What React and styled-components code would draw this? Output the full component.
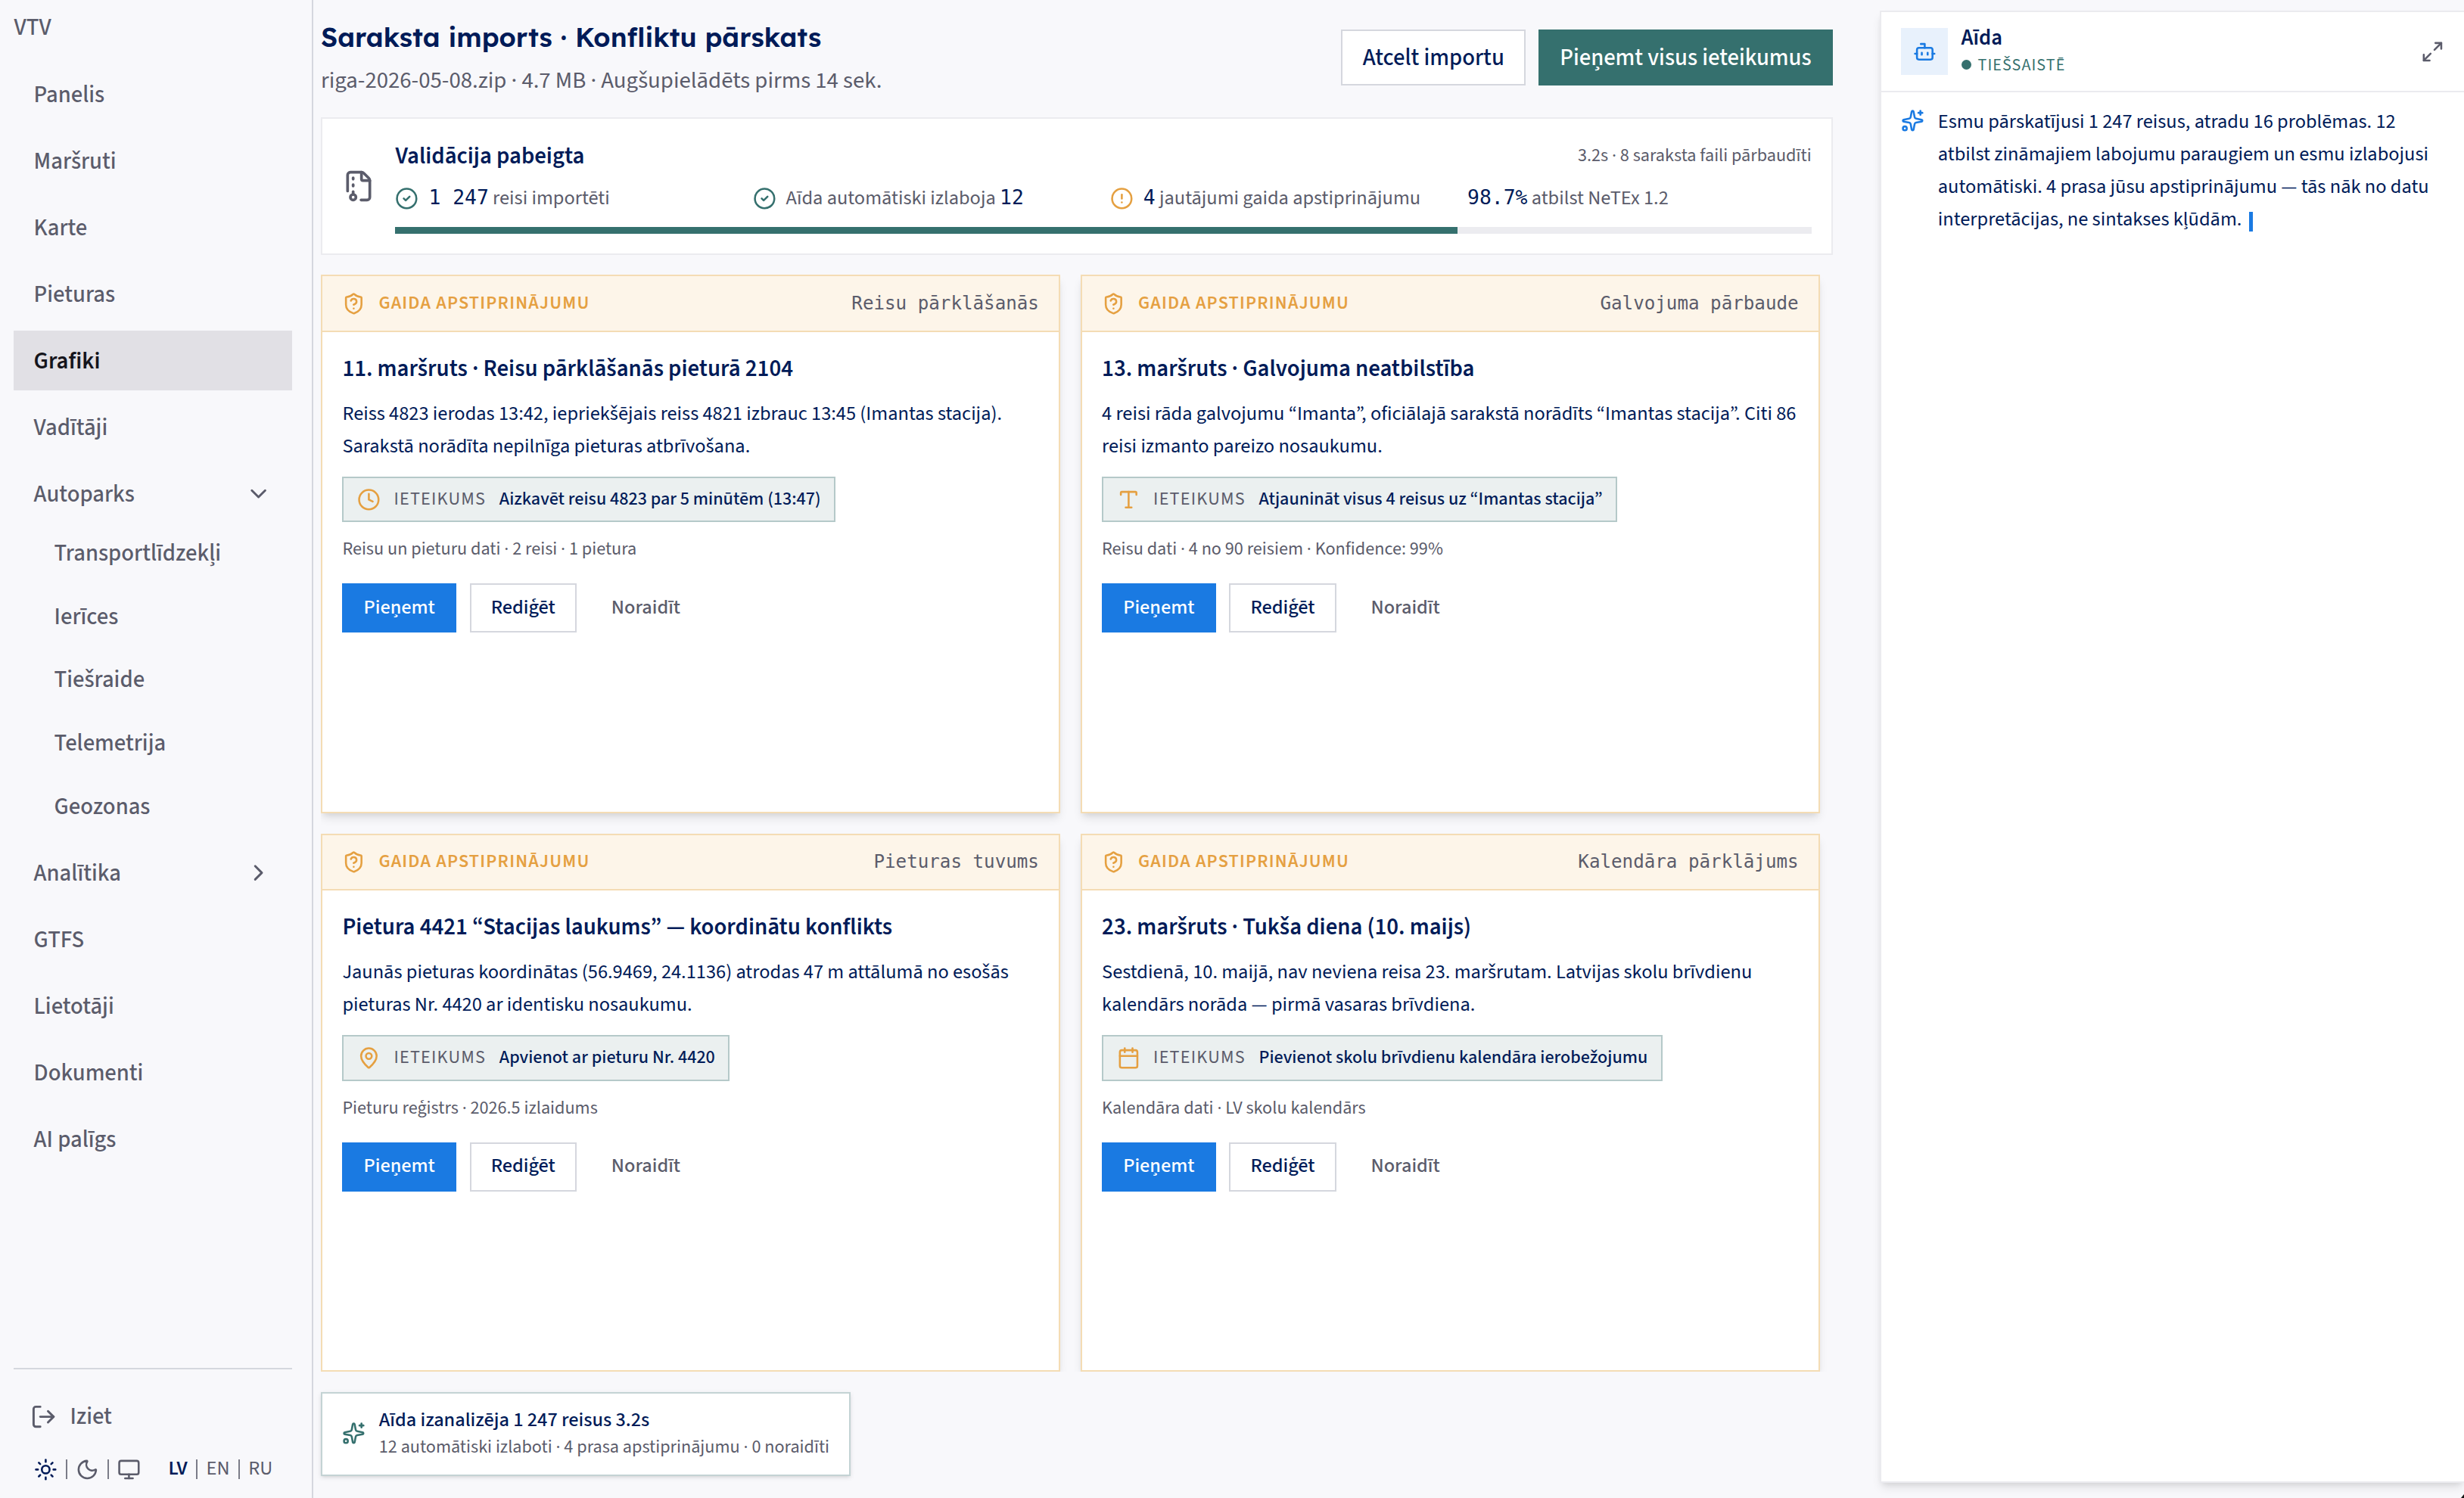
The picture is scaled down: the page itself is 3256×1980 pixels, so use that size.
import React from 'react';
import styled, { createGlobalStyle } from 'styled-components';
import {
    Bot,
    Calendar,
    ChevronDown,
    ChevronRight,
    CircleAlert,
    CircleCheck,
    Clock,
    FileArchive,
    LogOut,
    MapPin,
    Maximize2,
    Monitor,
    Moon,
    ShieldQuestionMark,
    Sparkles,
    Sun,
    Type,
} from 'lucide-react';

const navy = '#001b58';
const grey = '#5b5c6b';
const teal = '#35706e';
const amber = '#e5a041';
const blue = '#1a7ae2';
const line = '#d5d7de';
const mono = '"DejaVu Sans Mono", "Liberation Mono", monospace';

const navItems = [
    { label: 'Panelis' },
    { label: 'Maršruti' },
    { label: 'Karte' },
    { label: 'Pieturas' },
    { label: 'Grafiki', active: true },
    { label: 'Vadītāji' },
    {
        label: 'Autoparks',
        icon: ChevronDown,
        children: ['Transportlīdzekļi', 'Ierīces', 'Tiešraide', 'Telemetrija', 'Geozonas'],
    },
    { label: 'Analītika', icon: ChevronRight },
    { label: 'GTFS' },
    { label: 'Lietotāji' },
    { label: 'Dokumenti' },
    { label: 'AI palīgs' },
];

const conflicts = [
    {
        category: 'Reisu pārklāšanās',
        title: '11. maršruts · Reisu pārklāšanās pieturā 2104',
        text: 'Reiss 4823 ierodas 13:42, iepriekšējais reiss 4821 izbrauc 13:45 (Imantas stacija). Sarakstā norādīta nepilnīga pieturas atbrīvošana.',
        icon: Clock,
        fix: 'Aizkavēt reisu 4823 par 5 minūtēm (13:47)',
        meta: 'Reisu un pieturu dati · 2 reisi · 1 pietura',
    },
    {
        category: 'Galvojuma pārbaude',
        title: '13. maršruts · Galvojuma neatbilstība',
        text: '4 reisi rāda galvojumu “Imanta”, oficiālajā sarakstā norādīts “Imantas stacija”. Citi 86 reisi izmanto pareizo nosaukumu.',
        icon: Type,
        fix: 'Atjaunināt visus 4 reisus uz “Imantas stacija”',
        meta: 'Reisu dati · 4 no 90 reisiem · Konfidence: 99%',
    },
    {
        category: 'Pieturas tuvums',
        title: 'Pietura 4421 “Stacijas laukums” — koordinātu konflikts',
        text: 'Jaunās pieturas koordinātas (56.9469, 24.1136) atrodas 47 m attālumā no esošās pieturas Nr. 4420 ar identisku nosaukumu.',
        icon: MapPin,
        fix: 'Apvienot ar pieturu Nr. 4420',
        meta: 'Pieturu reģistrs · 2026.5 izlaidums',
    },
    {
        category: 'Kalendāra pārklājums',
        title: '23. maršruts · Tukša diena (10. maijs)',
        text: 'Sestdienā, 10. maijā, nav neviena reisa 23. maršrutam. Latvijas skolu brīvdienu kalendārs norāda — pirmā vasaras brīvdiena.',
        icon: Calendar,
        fix: 'Pievienot skolu brīvdienu kalendāra ierobežojumu',
        meta: 'Kalendāra dati · LV skolu kalendārs',
    },
];

export default () => (
    <Page>
        <GlobalStyle />
        <Sidebar>
            <Brand>VTV</Brand>
            <Nav>
                {navItems.map(({ label, active, icon: Icon, children }) => (
                    <div key={label}>
                        <NavItem $active={active}>
                            {label}
                            {Icon ? <Icon size={35.2} /> : ''}
                        </NavItem>
                        {children ? (
                            <SubNav>
                                {children.map((child) => <SubItem key={child}>{child}</SubItem>)}
                            </SubNav>
                        ) : ''}
                    </div>
                ))}
            </Nav>
            <SidebarFooter>
                <Logout><LogOut size={35.2} />Iziet</Logout>
                <Settings>
                    <Themes>
                        <Sun size={30.8} color={navy} />
                        <Divider />
                        <Moon size={30.8} />
                        <Divider />
                        <Monitor size={30.8} />
                    </Themes>
                    <Languages>
                        <Language $active>LV</Language>
                        <Divider />
                        <Language>EN</Language>
                        <Divider />
                        <Language>RU</Language>
                    </Languages>
                </Settings>
            </SidebarFooter>
        </Sidebar>

        <Main>
            <Header>
                <div>
                    <Title>Saraksta imports · Konfliktu pārskats</Title>
                    <Subtitle>riga-2026-05-08.zip · 4.7 MB · Augšupielādēts pirms 14 sek.</Subtitle>
                </div>
                <HeaderActions>
                    <HeaderButton>Atcelt importu</HeaderButton>
                    <HeaderButton $primary>Pieņemt visus ieteikumus</HeaderButton>
                </HeaderActions>
            </Header>

            <Validation>
                <FileArchive size={44} color={grey} />
                <ValidationBody>
                    <ValidationTop>
                        <ValidationTitle>Validācija pabeigta</ValidationTitle>
                        <Small>3.2s · 8 saraksta faili pārbaudīti</Small>
                    </ValidationTop>
                    <Stats>
                        <Stat>
                            <CircleCheck size={30.8} color={teal} />
                            <span><Value>1 247</Value> reisi importēti</span>
                        </Stat>
                        <Stat>
                            <CircleCheck size={30.8} color={teal} />
                            <span>Aīda automātiski izlaboja <Value>12</Value></span>
                        </Stat>
                        <Stat>
                            <CircleAlert size={30.8} color={amber} />
                            <span><Value>4</Value> jautājumi gaida apstiprinājumu</span>
                        </Stat>
                        <Stat>
                            <span><Value>98.7%</Value> atbilst NeTEx 1.2</span>
                        </Stat>
                    </Stats>
                    <Progress><ProgressFill /></Progress>
                </ValidationBody>
            </Validation>

            <Conflicts>
                {conflicts.map(({ category, title, text, icon: Icon, fix, meta }) => (
                    <Card key={title}>
                        <CardHeader>
                            <ShieldQuestionMark size={30.8} color={amber} />
                            <CardStatus>GAIDA APSTIPRINĀJUMU</CardStatus>
                            <Category>{category}</Category>
                        </CardHeader>
                        <CardBody>
                            <CardTitle>{title}</CardTitle>
                            <CardText>{text}</CardText>
                            <Suggestion>
                                <Icon size={30.8} color={amber} />
                                <SuggestionLabel>IETEIKUMS</SuggestionLabel>
                                <SuggestionText>{fix}</SuggestionText>
                            </Suggestion>
                            <Small>{meta}</Small>
                            <CardActions>
                                <AcceptButton>Pieņemt</AcceptButton>
                                <EditButton>Rediģēt</EditButton>
                                <CardButton>Noraidīt</CardButton>
                            </CardActions>
                        </CardBody>
                    </Card>
                ))}
            </Conflicts>

            <Toast>
                <Sparkles size={30.8} color={teal} />
                <div>
                    <ToastTitle>Aīda izanalizēja 1 247 reisus 3.2s</ToastTitle>
                    <ToastText>12 automātiski izlaboti · 4 prasa apstiprinājumu · 0 noraidīti</ToastText>
                </div>
            </Toast>
        </Main>

        <Assistant>
            <AssistantHeader>
                <Avatar><Bot size={30.8} color={blue} /></Avatar>
                <AssistantInfo>
                    <AssistantName>Aīda</AssistantName>
                    <Online>TIEŠSAISTĒ</Online>
                </AssistantInfo>
                <Maximize2 size={30.8} color={grey} />
            </AssistantHeader>
            <Message>
                <Sparkles size={30.8} color={blue} />
                <MessageText>
                    Esmu pārskatījusi 1 247 reisus, atradu 16 problēmas. 12 atbilst zināmajiem labojumu paraugiem
                    un esmu izlabojusi automātiski. 4 prasa jūsu apstiprinājumu — tās nāk no datu interpretācijas,
                    ne sintakses kļūdām. <Cursor />
                </MessageText>
            </Message>
        </Assistant>
        <Grip viewBox="0 0 4 5"><path d="M4 0V5H0Z" fill="#111" /></Grip>
    </Page>
);

const GlobalStyle = createGlobalStyle`
* {
    box-sizing: border-box;
}
body {
    margin: 0;
    background: #f8f8fb;
    color: ${navy};
    font: 400 26.4px/1.5 "Source Sans 3", "Noto Sans", sans-serif;
}
button {
    font: inherit;
}
svg {
    flex-shrink: 0;
}
`;

const Page = styled.div`
display: grid;
grid-template-columns: 414px 2008px minmax(0, 1fr);
grid-template-rows: 1980px;
overflow: hidden;
position: relative;
`;

const Sidebar = styled.aside`
display: flex;
flex-direction: column;
padding: 13px 26px 16px 17.6px;
border-right: 2px solid ${line};
color: ${grey};
font-size: 30.8px;
font-weight: 500;
`;

const Brand = styled.div`
height: 71.6px;
padding-left: 1px;
`;

const Nav = styled.nav`
display: flex;
flex-direction: column;
gap: 8.8px;
flex-grow: 1;
`;

const NavItem = styled.div`
display: flex;
align-items: center;
justify-content: space-between;
height: 79.2px;
padding: 1px 26.4px 0 27px;
background: ${({ $active }) => $active ? '#e1e0e5' : 'transparent'};
color: ${({ $active }) => $active ? '#15151c' : 'inherit'};
font-weight: ${({ $active }) => $active ? 600 : 500};
`;

const SubNav = styled.div`
display: flex;
flex-direction: column;
gap: 4.4px;
`;

const SubItem = styled.div`
display: flex;
align-items: center;
height: 79.2px;
padding-left: 54px;
`;

const SidebarFooter = styled.div`
border-top: 2px solid ${line};
`;

const Logout = styled.div`
display: flex;
align-items: center;
gap: 17.6px;
padding-left: 22px;
height: 79.2px;
margin-top: 23px;
`;

const Settings = styled.div`
display: flex;
align-items: center;
height: 44px;
margin-top: 8px;
padding-left: 27.4px;
font-size: 26.4px;
font-weight: 400;
`;

const Themes = styled.div`
display: flex;
align-items: center;
gap: 11px;
margin-right: 37px;
`;

const Languages = styled.div`
display: flex;
align-items: center;
gap: 11.4px;
`;

const Language = styled.span`
color: ${({ $active }) => $active ? navy : 'inherit'};
font-weight: ${({ $active }) => $active ? 600 : 400};
`;

const Divider = styled.span`
width: 2px;
height: 26px;
background: ${grey};
opacity: .8;
`;

const Main = styled.main`
display: flex;
flex-direction: column;
gap: 26.4px;
padding: 22px 0 29.4px 10px;
`;

const Header = styled.header`
display: flex;
align-items: center;
justify-content: space-between;
height: 107px;
`;

const Title = styled.h1`
margin: 0;
font: 600 35.2px/52px Lexend, Inter, sans-serif;
`;

const Subtitle = styled.div`
color: ${grey};
font-size: 30.8px;
line-height: 50px;
padding-top: 6px;
margin-bottom: -2px;
`;

const HeaderActions = styled.div`
display: flex;
gap: 16.6px;
`;

const HeaderButton = styled.button`
height: 74px;
padding: 2px 26.4px 0;
border: 2px solid ${({ $primary }) => $primary ? teal : line};
background: ${({ $primary }) => $primary ? teal : '#fff'};
color: ${({ $primary }) => $primary ? '#fff' : navy};
font-size: 30.8px;
font-weight: 500;
`;

const Validation = styled.section`
display: flex;
align-items: center;
gap: 26px;
height: 181.6px;
padding: 0 26.4px;
border: 2px solid #ebebef;
background: #fff;
`;

const ValidationBody = styled.div`
flex-grow: 1;
`;

const ValidationTop = styled.div`
display: flex;
align-items: center;
justify-content: space-between;
height: 44.2px;
`;

const ValidationTitle = styled.h2`
margin: 0;
font-size: 30.8px;
font-weight: 600;
`;

const Small = styled.div`
color: ${grey};
font-size: 24.2px;
line-height: 36.3px;
`;

const Stats = styled.div`
display: grid;
grid-template-columns: repeat(4, 1fr);
gap: 17.6px;
margin-top: 14px;
`;

const Stat = styled.div`
display: flex;
align-items: center;
gap: 13.2px;
height: 42px;
color: ${grey};
`;

const Value = styled.span`
color: ${navy};
font-family: ${mono};
font-weight: 500;
line-height: 1;
`;

const Progress = styled.div`
height: 8.8px;
margin-top: 16px;
background: #ececf0;
`;

const ProgressFill = styled.div`
width: 75%;
height: 100%;
background: ${teal};
`;

const Conflicts = styled.section`
display: grid;
grid-template-columns: repeat(2, 1fr);
grid-template-rows: repeat(2, 1fr);
gap: 26.4px;
flex-grow: 1;
padding-right: 17px;
overflow: hidden;
`;

const Card = styled.article`
border: 2px solid #f4dcb4;
background: #fff;
box-shadow: 0 8px 12px -2px rgba(0, 0, 0, .1), 0 4px 8px -4px rgba(0, 0, 0, .1);
`;

const CardHeader = styled.div`
display: flex;
align-items: center;
height: 73.4px;
padding: 0 26.4px;
border-bottom: 2px solid #f4dcb4;
background: #fdf5e9;
`;

const CardStatus = styled.span`
margin-left: 17.2px;
color: ${amber};
font-size: 24.2px;
font-weight: 600;
letter-spacing: .05em;
`;

const Category = styled.span`
margin-left: auto;
color: ${grey};
font-family: ${mono};
font-size: 24.2px;
`;

const CardBody = styled.div`
display: flex;
flex-direction: column;
align-items: flex-start;
gap: 17.9px;
padding: 27.2px 26.4px;
`;

const CardTitle = styled.h3`
margin: 0;
font-size: 30.8px;
font-weight: 600;
line-height: 1.375;
`;

const CardText = styled.p`
margin: 0;
line-height: 1.625;
`;

const Suggestion = styled.div`
display: flex;
align-items: center;
gap: 17.6px;
height: 60.5px;
padding: 0 17.6px;
border: 2px solid #b5c9c9;
background: #ebf0f0;
font-size: 24.2px;
`;

const SuggestionLabel = styled.span`
color: ${grey};
letter-spacing: .05em;
`;

const SuggestionText = styled.span`
font-weight: 500;
`;

const CardActions = styled.div`
display: flex;
gap: 17.6px;
padding-top: 9px;
`;

const CardButton = styled.button`
height: 65px;
padding: 0 26.2px;
border: 2px solid transparent;
background: transparent;
color: ${grey};
font-weight: 500;
`;

const AcceptButton = styled(CardButton)`
border-color: ${blue};
background: ${blue};
color: #fff;
`;

const EditButton = styled(CardButton)`
border-color: ${line};
background: #fff;
color: ${navy};
`;

const Toast = styled.div`
display: flex;
align-items: center;
align-self: flex-start;
gap: 17.6px;
height: 110.8px;
padding: 0 26.4px 1px;
border: 2px solid #c4d3d4;
background: #fff;
box-shadow: 0 2px 6px rgba(0, 0, 0, .1), 0 2px 4px -2px rgba(0, 0, 0, .1);
`;

const ToastTitle = styled.div`
font-weight: 500;
line-height: 36px;
`;

const ToastText = styled.div`
color: ${grey};
font-size: 24.2px;
line-height: 36px;
`;

const Assistant = styled.aside`
margin: 14px 0 20px 62px;
border: 2px solid #ebebef;
border-right: 0;
background: #fff;
box-shadow: 0 8px 12px -2px rgba(0, 0, 0, .1), 0 4px 8px -4px rgba(0, 0, 0, .1);
`;

const AssistantHeader = styled.div`
display: flex;
align-items: center;
height: 106px;
padding: 0 26.4px;
border-bottom: 2px solid #ebebef;
`;

const Avatar = styled.div`
display: flex;
align-items: center;
justify-content: center;
width: 61.6px;
height: 61.6px;
background: #e8f1fc;
`;

const AssistantInfo = styled.div`
flex-grow: 1;
margin-left: 17.6px;
`;

const AssistantName = styled.div`
font-size: 28.6px;
font-weight: 600;
line-height: 35.8px;
`;

const Online = styled.div`
display: flex;
align-items: center;
gap: 8.8px;
color: ${teal};
font-size: 22px;
line-height: 34px;
letter-spacing: .05em;
&::before {
    content: "";
    width: 13.2px;
    height: 13.2px;
    border-radius: 50%;
    background: ${teal};
}
`;

const Message = styled.div`
display: flex;
gap: 17.6px;
padding: 18px 26.4px;
> svg {
    margin-top: 4px;
}
`;

const MessageText = styled.p`
margin: 0;
line-height: 1.63;
`;

const Cursor = styled.span`
display: inline-block;
width: 5px;
height: 26.4px;
margin-left: 4px;
background: ${blue};
vertical-align: -8px;
`;

const Grip = styled.svg`
position: absolute;
right: 0;
bottom: 0;
width: 4px;
height: 5px;
`;
